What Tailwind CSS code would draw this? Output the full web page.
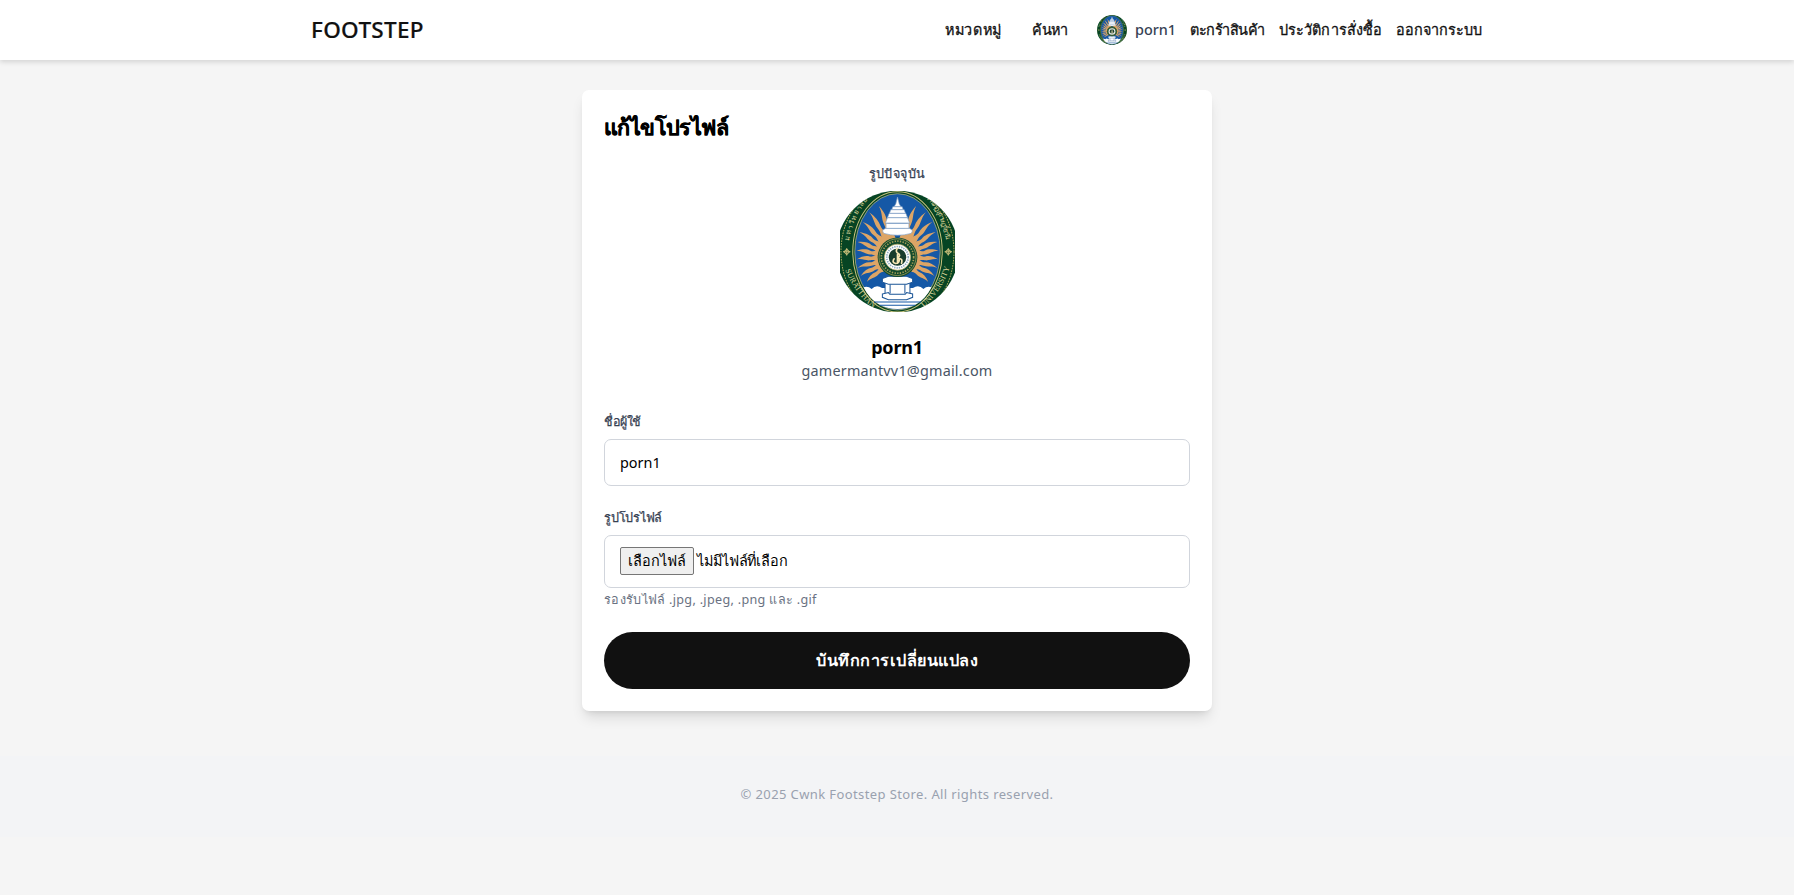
<!DOCTYPE html>
<html lang="th">
<head>
<meta charset="utf-8">
<title>FOOTSTEP</title>
<script src="https://cdn.jsdelivr.net/npm/@tailwindcss/browser@4"></script>
</head>
<body class="min-h-screen overflow-hidden bg-[#f5f5f5] font-['Noto_Sans',sans-serif] text-[14.4px] text-black whitespace-nowrap">
<svg class="absolute size-0">
  <defs>
    <clipPath id="frame"><circle cx="171" cy="181" r="182"/></clipPath>
    <path id="ray" d="M-16 -50C-14 -72 -5 -78 -9 -94C-12 -110 -1 -120 -6 -142C6 -124 9 -108 5 -96C2 -82 15 -74 16 -50Z"/>
    <symbol id="emblem" viewBox="0 0 342 362" preserveAspectRatio="none">
      <g clip-path="url(#frame)">
        <rect width="342" height="362" fill="#064423"/>
        <ellipse cx="171" cy="182" rx="168" ry="205" fill="none" stroke="#a9a65a" stroke-width="3" stroke-dasharray="5 3"/>
        <ellipse cx="171" cy="182" rx="133" ry="180" fill="#064423" stroke="#c9c27c" stroke-width="3"/>
        <ellipse cx="171" cy="182" rx="127" ry="174" fill="#1558a6" stroke="#c9c27c" stroke-width="2"/>
        <g fill="#dda566">
          <use href="#ray" transform="translate(171 200) rotate(-18) scale(.8 1.16)"/>
          <use href="#ray" transform="translate(171 200) rotate(-30) scale(.8 1.13)"/>
          <use href="#ray" transform="translate(171 200) rotate(-42) scale(.8 1.05)"/>
          <use href="#ray" transform="translate(171 200) rotate(-54) scale(.8 .96)"/>
          <use href="#ray" transform="translate(171 200) rotate(-66) scale(.8 .9)"/>
          <use href="#ray" transform="translate(171 200) rotate(-78) scale(.8 .87)"/>
          <use href="#ray" transform="translate(171 200) rotate(-90) scale(.8 .86)"/>
          <use href="#ray" transform="translate(171 200) rotate(-102) scale(.8 .86)"/>
          <use href="#ray" transform="translate(171 200) rotate(-114) scale(.8 .86)"/>
          <use href="#ray" transform="translate(171 200) rotate(-126) scale(.8 .82)"/>
          <use href="#ray" transform="translate(171 200) rotate(18) scale(-.8 1.16)"/>
          <use href="#ray" transform="translate(171 200) rotate(30) scale(-.8 1.13)"/>
          <use href="#ray" transform="translate(171 200) rotate(42) scale(-.8 1.05)"/>
          <use href="#ray" transform="translate(171 200) rotate(54) scale(-.8 .96)"/>
          <use href="#ray" transform="translate(171 200) rotate(66) scale(-.8 .9)"/>
          <use href="#ray" transform="translate(171 200) rotate(78) scale(-.8 .87)"/>
          <use href="#ray" transform="translate(171 200) rotate(90) scale(-.8 .86)"/>
          <use href="#ray" transform="translate(171 200) rotate(102) scale(-.8 .86)"/>
          <use href="#ray" transform="translate(171 200) rotate(114) scale(-.8 .86)"/>
          <use href="#ray" transform="translate(171 200) rotate(126) scale(-.8 .82)"/>
        </g>
        <!-- cloud base -->
        <path d="M70 288Q84 284 94 293Q108 278 125 290H217Q234 278 248 293Q258 284 272 288C250 334 210 353 171 353S92 334 70 288Z" fill="#fff"/>
        <path d="M100 332H242M118 342H224" stroke="#1558a6" stroke-width="3"/>
        <!-- tiered crown -->
        <g fill="#fff" stroke="#7f9fc4" stroke-width="2">
          <path d="M171 18L176 38L181 47H161L166 38Z"/>
          <path d="M157 47H185L188 56H154Z"/>
          <path d="M151 56H191L195 67H147Z"/>
          <path d="M146 67H196L201 80H141Z"/>
          <path d="M141 80H201L207 96H135Z"/>
          <path d="M137 97H205V112H137Z"/>
          <path d="M135 112H207Q221 118 211 127Q171 138 131 127Q121 118 135 112Z"/>
        </g>
        <!-- pedestal -->
        <g fill="#fff" stroke="#1b5597" stroke-width="3">
          <path d="M134 272H208V314L194 318H148L134 314Z"/>
          <path d="M126 262L144 255H198L216 262V273L198 279H144L126 273Z"/>
          <path d="M126 308L144 304L148 309H194L198 304L216 308V318L198 325H144L126 318Z"/>
          <path d="M149 280V307M193 280V307"/>
        </g>
        <!-- central seal -->
        <circle cx="171" cy="198" r="59" fill="#134a2d"/>
        <circle cx="171" cy="198" r="55" fill="none" stroke="#b8ac62" stroke-width="2"/>
        <circle cx="171" cy="198" r="48" fill="none" stroke="#a79e58" stroke-width="5" stroke-dasharray="4 4"/>
        <circle cx="171" cy="198" r="39" fill="#fff" stroke="#b8ac62" stroke-width="2"/>
        <circle cx="171" cy="198" r="32" fill="none" stroke="#8fa9bd" stroke-width="5" stroke-dasharray="4 3"/>
        <circle cx="171" cy="198" r="26" fill="#173c2d"/>
        <path d="M170 172Q164 182 173 187T171 201M161 203Q153 214 166 217Q178 216 176 202Q187 202 183 216M171 190V216" fill="none" stroke="#f5e5b4" stroke-width="5" stroke-linecap="round"/>
        <path d="M20 174L28 182L20 190L12 182ZM322 174L330 182L322 190L314 182Z" fill="#064423" stroke="#c6bd78" stroke-width="3"/>
        <path d="M20 171V193M9 182H31M322 171V193M311 182H333" stroke="#c6bd78" stroke-width="3"/>
        <path id="tl" d="M27 149Q37 82 84 26" fill="none"/>
        <path id="tr" d="M256 20Q305 74 315 151" fill="none"/>
        <path id="bl" d="M16 236Q42 304 100 352" fill="none"/>
        <path id="br" d="M249 348Q302 300 325 232" fill="none"/>
        <g font-family="Noto Sans,sans-serif" font-size="21" fill="#ddd79c">
          <text textLength="135"><textPath href="#tl">มหาวิทยาลัย</textPath></text>
          <text textLength="140"><textPath href="#tr">ราชภัฏสุราษฎร์ธานี</textPath></text>
          <g font-family="Liberation Serif,serif" font-size="24">
            <text><textPath href="#bl">SURATTHANI</textPath></text>
            <text><textPath href="#br">UNIVERSITY</textPath></text>
          </g>
        </g>
      </g>
    </symbol>
  </defs>
</svg>

<header class="h-[60px] bg-white shadow-[0_2px_5px_rgba(0,0,0,0.14)]">
  <div class="mx-auto flex h-full w-[1172px] items-center text-[#111]">
    <a class="w-[634px] text-[22.5px] font-medium leading-none tracking-[0.3px] [-webkit-text-stroke:0.2px_#111]">FOOTSTEP</a>
    <nav class="flex items-center leading-[22px] [&>a]:[-webkit-text-stroke:0.3px_#111]">
      <a class="w-[87px] tracking-[0.7px]">หมวดหมู่</a>
      <a class="w-[65px] tracking-[-0.3px]">ค้นหา</a>
      <span class="flex w-[93px] items-center gap-2 text-gray-700">
        <svg class="size-[30px] rounded-full"><use href="#emblem"/></svg>
        <span class="font-medium">porn1</span>
      </span>
      <a class="w-[89px] tracking-[-0.5px]">ตะกร้าสินค้า</a>
      <a class="w-[117px] tracking-[0.1px]">ประวัติการสั่งซื้อ</a>
      <a>ออกจากระบบ</a>
    </nav>
  </div>
</header>

<main class="mx-auto mt-[30px] h-[621px] w-[630px] rounded-[7px] bg-white px-[22px] pt-[22px] shadow-[0_9px_14px_-3px_rgba(0,0,0,0.12),0_4px_6px_-4px_rgba(0,0,0,0.12)]">
  <h1 class="h-[50px] text-[21.6px] font-bold leading-[29px] tracking-[-0.6px] [-webkit-text-stroke:0.3px_#000]">แก้ไขโปรไฟล์</h1>
  <section class="flex flex-col items-center">
    <p class="h-[29px] pt-[3px] text-[12.6px] leading-[18px] tracking-[0.35px] text-gray-700 [-webkit-text-stroke:0.25px_#374151]">รูปปัจจุบัน</p>
    <svg class="h-[121px] w-[115px]"><use href="#emblem"/></svg>
    <h2 class="mt-[22px] text-[18px] font-bold leading-[26px] tracking-[-0.2px]">porn1</h2>
    <p class="leading-[22px] tracking-[0.2px] text-gray-600">gamermantvv1@gmail.com</p>
  </section>
  <form class="mt-[29px] flex flex-col">
    <label class="h-[28px] pt-px text-[12.6px] leading-[20px] tracking-[-0.4px] text-gray-700 [-webkit-text-stroke:0.25px_#374151]">ชื่อผู้ใช้</label>
    <div class="flex h-[47px] items-center rounded-[7px] border border-gray-300 px-[15px] leading-[22px]">porn1</div>
    <label class="mt-[21px] h-[28px] pt-px text-[12.6px] leading-[20px] tracking-[-0.25px] text-gray-700 [-webkit-text-stroke:0.25px_#374151]">รูปโปรไฟล์</label>
    <div class="flex h-[53px] items-center gap-[3px] rounded-[7px] border border-gray-300 px-[15px] pb-[2px]">
      <span class="flex h-[28px] w-[74px] items-center justify-center rounded-[2px] border border-[#767676] bg-[#efefef]">เลือกไฟล์</span>
      <span class="tracking-[-0.1px]">ไม่มีไฟล์ที่เลือก</span>
    </div>
    <p class="mt-[2px] h-[42px] text-[12.6px] leading-[20px] tracking-[0.31px] text-gray-500">รองรับไฟล์ .jpg, .jpeg, .png และ .gif</p>
    <button type="button" class="h-[57px] rounded-full bg-[#111] text-[16.2px] font-semibold tracking-[0.5px] text-white">บันทึกการเปลี่ยนแปลง</button>
  </form>
</main>

<footer class="mt-[45px] flex h-[81px] justify-center bg-gray-100 pt-[28px] text-[13px] leading-[20px] tracking-[0.39px] text-gray-400">© 2025 Cwnk Footstep Store. All rights reserved.</footer>
</body>
</html>
